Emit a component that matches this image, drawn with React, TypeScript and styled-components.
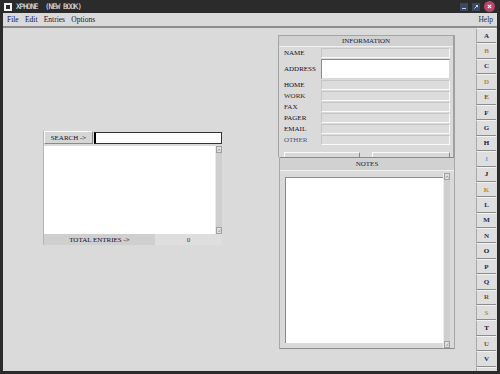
import React from "react";
import styled, { createGlobalStyle } from "styled-components";

const Global = createGlobalStyle`
  *, *::before, *::after { box-sizing: border-box; }
  html, body { margin: 0; padding: 0; background: #2b2b2b; }
  #root { width: 500px; height: 374px; }
`;

const serif = `"Liberation Serif", "Times New Roman", serif`;

const Window = styled.div`
  width: 500px;
  height: 374px;
  background: #2b2b2b;
  display: flex;
  flex-direction: column;
  overflow: hidden;
`;

const TitleBar = styled.div`
  height: 13px;
  flex-shrink: 0;
  display: flex;
  align-items: center;
  padding: 0 5px 0 4px;
`;

const AppIcon = styled.div`
  width: 8px;
  height: 8px;
  border: 2px solid #f2f2f2;
`;

const TitleText = styled.span`
  margin-left: 4px;
  font-family: "DejaVu Sans Mono", monospace;
  font-size: 7.5px;
  letter-spacing: -0.9px;
  color: #ececec;
  white-space: pre;
  line-height: 1;
`;

const WinButtons = styled.div`
  margin-left: auto;
  display: flex;
  align-items: center;
  gap: 4px;
`;

const WinButton = styled.div`
  width: 8px;
  height: 8px;
  background: #3b4862;
  display: flex;
  align-items: center;
  justify-content: center;
`;

const CloseButton = styled.div`
  width: 11px;
  height: 11px;
  border-radius: 50%;
  background: #b4466c;
  display: flex;
  align-items: center;
  justify-content: center;
`;

const Frame = styled.div`
  flex: 1;
  display: flex;
  padding: 0 3px 3px 3px;
  min-height: 0;
`;

const Client = styled.div`
  flex: 1;
  background: #dadada;
  display: flex;
  flex-direction: column;
  min-height: 0;
`;

const MenuBar = styled.div`
  height: 15px;
  flex-shrink: 0;
  display: flex;
  align-items: center;
  gap: 6.3px;
  padding: 0 4px;
  border-bottom: 2px solid #8c8c8c;
  font-family: ${serif};
  font-size: 7.5px;
  color: #121238;
`;

const MenuItem = styled.span<{ $right?: boolean }>`
  margin-left: ${(p) => (p.$right ? "auto" : "0")};
  color: ${(p) => (p.$right ? "#1a3450" : "#121238")};
`;

const Body = styled.div`
  flex: 1;
  display: flex;
  min-height: 0;
`;

const Main = styled.div`
  flex: 1;
  display: flex;
  align-items: flex-start;
  padding-left: 40px;
  font-family: ${serif};
  font-size: 7px;
  color: #10102c;
`;

/* ---------- Search panel ---------- */

const SearchPanel = styled.div`
  margin-top: 103px;
  width: 179px;
  display: flex;
  flex-direction: column;
  border-left: 1px solid #b4b4b4;
`;

const SearchRow = styled.div`
  display: flex;
  height: 13px;
`;

const SearchButton = styled.div`
  width: 49px;
  height: 13px;
  background: #d6d6d6;
  border: 1px solid;
  border-color: #fafafa #8a8a8a #8a8a8a #fafafa;
  display: flex;
  align-items: center;
  justify-content: center;
  white-space: nowrap;
`;

const SearchInput = styled.div`
  flex: 1;
  height: 12px;
  margin: 1px 0 0 1px;
  background: #fff;
  border: 1px solid #333;
  border-left: 2px solid #000;
`;

const ListRow = styled.div`
  display: flex;
  height: 88px;
  margin-top: 2px;
`;

const ListArea = styled.div`
  flex: 1;
  background: #fff;
`;

const Scrollbar = styled.div<{ $mt?: number }>`
  width: 7px;
  margin-top: ${(p) => p.$mt ?? 0}px;
  background: #cfcfcf;
  border-left: 1px solid #ececec;
  display: flex;
  flex-direction: column;
  justify-content: space-between;
`;

const ScrollBox = styled.div`
  height: 7px;
  background: #e2e2e2;
  border: 1px solid #a0a0a0;
  display: flex;
  align-items: center;
  justify-content: center;
`;

const Footer = styled.div`
  display: flex;
  height: 11px;
`;

const FooterLabel = styled.div`
  width: 111px;
  background: #cfcfcf;
  display: flex;
  align-items: center;
  justify-content: center;
  white-space: nowrap;
`;

const FooterValue = styled.div`
  flex: 1;
  background: #dedede;
  display: flex;
  align-items: center;
  justify-content: center;
  color: #24485a;
`;

/* ---------- Right column ---------- */

const RightColumn = styled.div`
  margin-left: 56px;
  margin-top: 7px;
  width: 177px;
  display: flex;
  flex-direction: column;
`;

const InfoPanel = styled.div`
  height: 122px;
  overflow: hidden;
  border: 1px solid #a4a4a4;
  border-right: 2px solid #a0a0a0;
  border-bottom: none;
  display: flex;
  flex-direction: column;
`;

const PanelHeader = styled.div<{ $h: number; $topLine?: boolean }>`
  height: ${(p) => p.$h}px;
  flex-shrink: 0;
  background: #d1d1d1;
  border-top: ${(p) => (p.$topLine ? "1px solid #8a8a8a" : "none")};
  border-bottom: 1px solid #f0f0f0;
  display: flex;
  align-items: center;
  justify-content: center;
  color: #142448;
`;

const InfoGrid = styled.div`
  display: grid;
  grid-template-columns: 37px 129px;
  row-gap: 1px;
  padding: 1px 0 0 5px;
`;

const Label = styled.div<{ $tone?: string }>`
  align-self: center;
  white-space: nowrap;
  color: ${(p) => p.$tone ?? "#10102c"};
`;

const Field = styled.div<{ $tall?: boolean }>`
  height: ${(p) => (p.$tall ? 20 : 10)}px;
  background: ${(p) => (p.$tall ? "#ffffff" : "#dcdcdc")};
  border: 1px solid;
  border-color: ${(p) =>
    p.$tall ? "#8a8a8a #d8d8d8 #d8d8d8 #8a8a8a" : "#c6c6c6 #fafafa #fafafa #c6c6c6"};
`;

const ButtonRow = styled.div`
  display: flex;
  gap: 12px;
  padding-left: 5px;
  margin-top: 7px;
`;

const PanelButton = styled.div<{ $w: number }>`
  width: ${(p) => p.$w}px;
  height: 12px;
  background: #d8d8d8;
  border-top: 1px solid #fafafa;
  border-left: 1px solid #fafafa;
  border-right: 1px solid #8a8a8a;
`;

const NotesPanel = styled.div`
  height: 192px;
  margin-left: 1px;
  border: 1px solid #a8a8a8;
  border-top: none;
  border-bottom: 1px solid #8a8a8a;
  display: flex;
  flex-direction: column;
`;

const NotesBody = styled.div`
  flex: 1;
  display: flex;
  min-height: 0;
`;

const NotesTextWrap = styled.div`
  width: 163px;
  padding: 6px 0 5px 5px;
  display: flex;
`;

const NotesArea = styled.div`
  flex: 1;
  background: #fff;
  border-top: 1px solid #8a8a8a;
  border-left: 1px solid #8a8a8a;
`;

/* ---------- Alphabet ---------- */

const AlphaCol = styled.div`
  width: 20px;
  margin-right: 1px;
  display: flex;
  flex-direction: column;
  overflow: hidden;
`;

const AlphaButton = styled.div<{ $c: string }>`
  height: 15.4px;
  flex-shrink: 0;
  background: #dedede;
  border-top: 1px solid #f2f2f2;
  border-left: 1px solid #a8a8a8;
  border-bottom: 1px solid #8c8c8c;
  display: flex;
  align-items: center;
  justify-content: center;
  font-family: ${serif};
  font-size: 7px;
  font-weight: bold;
  color: ${(p) => p.$c};
`;

const navy = "#1c2a5a";
const orange = "#c0822a";
const brown = "#8a4a22";
const dark = "#12122e";
const letterColors: Record<string, string> = {
  A: navy, B: orange, C: navy, D: orange, E: brown, F: navy, G: navy, H: dark,
  I: "#6aa6d6", J: dark, K: orange, L: navy, M: navy, N: navy, O: dark, P: navy,
  Q: navy, R: brown, S: "#b08a4a", T: dark, U: brown, V: navy, W: navy,
};

const UpArrow = () => (
  <svg width="5" height="4" viewBox="0 0 5 4">
    <path d="M0.5 3.5 L2.5 0.5 L4.5 3.5" fill="none" stroke="#909090" strokeWidth="0.8" />
  </svg>
);

const Grip = () => (
  <svg width="5" height="5" viewBox="0 0 5 5">
    <path d="M1 4.5 L4.5 1 M3 4.5 L4.5 3" stroke="#8a8a8a" strokeWidth="0.8" />
  </svg>
);

const infoRows: { label: string; tone?: string; tall?: boolean }[] = [
  { label: "NAME" },
  { label: "ADDRESS", tall: true },
  { label: "HOME" },
  { label: "WORK", tone: "#3a2424" },
  { label: "FAX", tone: "#20203a" },
  { label: "PAGER" },
  { label: "EMAIL" },
  { label: "OTHER", tone: "#44588a" },
];

export default function App() {
  const letters = "ABCDEFGHIJKLMNOPQRSTUVW".split("");
  return (
    <>
      <Global />
      <Window>
        <TitleBar>
          <AppIcon />
          <TitleText>XPHONE  (NEW BOOK)</TitleText>
          <WinButtons>
            <WinButton>
              <svg width="8" height="8" viewBox="0 0 8 8">
                <path d="M2 5.5 H6" stroke="#c8cce0" strokeWidth="1" />
              </svg>
            </WinButton>
            <WinButton>
              <svg width="8" height="8" viewBox="0 0 8 8">
                <path d="M2.5 5.5 L5.5 2.5 M3.8 2.5 H5.5 V4.2" fill="none" stroke="#e0e4f0" strokeWidth="0.9" />
              </svg>
            </WinButton>
            <CloseButton>
              <svg width="7" height="7" viewBox="0 0 7 7">
                <path d="M1.8 1.8 L5.2 5.2 M5.2 1.8 L1.8 5.2" stroke="#fff" strokeWidth="1.2" />
              </svg>
            </CloseButton>
          </WinButtons>
        </TitleBar>
        <Frame>
          <Client>
            <MenuBar>
              <MenuItem>File</MenuItem>
              <MenuItem>Edit</MenuItem>
              <MenuItem>Entries</MenuItem>
              <MenuItem>Options</MenuItem>
              <MenuItem $right>Help</MenuItem>
            </MenuBar>
            <Body>
              <Main>
                <SearchPanel>
                  <SearchRow>
                    <SearchButton>SEARCH -&gt;</SearchButton>
                    <SearchInput />
                  </SearchRow>
                  <ListRow>
                    <ListArea />
                    <Scrollbar>
                      <ScrollBox>
                        <UpArrow />
                      </ScrollBox>
                      <ScrollBox>
                        <Grip />
                      </ScrollBox>
                    </Scrollbar>
                  </ListRow>
                  <Footer>
                    <FooterLabel>TOTAL ENTRIES -&gt;</FooterLabel>
                    <FooterValue>0</FooterValue>
                  </Footer>
                </SearchPanel>
                <RightColumn>
                  <InfoPanel>
                    <PanelHeader $h={11}>INFORMATION</PanelHeader>
                    <InfoGrid>
                      {infoRows.map((r) => (
                        <React.Fragment key={r.label}>
                          <Label $tone={r.tone}>{r.label}</Label>
                          <Field $tall={r.tall} />
                        </React.Fragment>
                      ))}
                    </InfoGrid>
                    <ButtonRow>
                      <PanelButton $w={76} />
                      <PanelButton $w={78} />
                    </ButtonRow>
                  </InfoPanel>
                  <NotesPanel>
                    <PanelHeader $h={14} $topLine>NOTES</PanelHeader>
                    <NotesBody>
                      <NotesTextWrap>
                        <NotesArea />
                      </NotesTextWrap>
                      <Scrollbar $mt={2}>
                        <ScrollBox>
                          <UpArrow />
                        </ScrollBox>
                        <ScrollBox>
                          <Grip />
                        </ScrollBox>
                      </Scrollbar>
                    </NotesBody>
                  </NotesPanel>
                </RightColumn>
              </Main>
              <AlphaCol>
                {letters.map((l) => (
                  <AlphaButton key={l} $c={letterColors[l]}>
                    {l}
                  </AlphaButton>
                ))}
              </AlphaCol>
            </Body>
          </Client>
        </Frame>
      </Window>
    </>
  );
}
